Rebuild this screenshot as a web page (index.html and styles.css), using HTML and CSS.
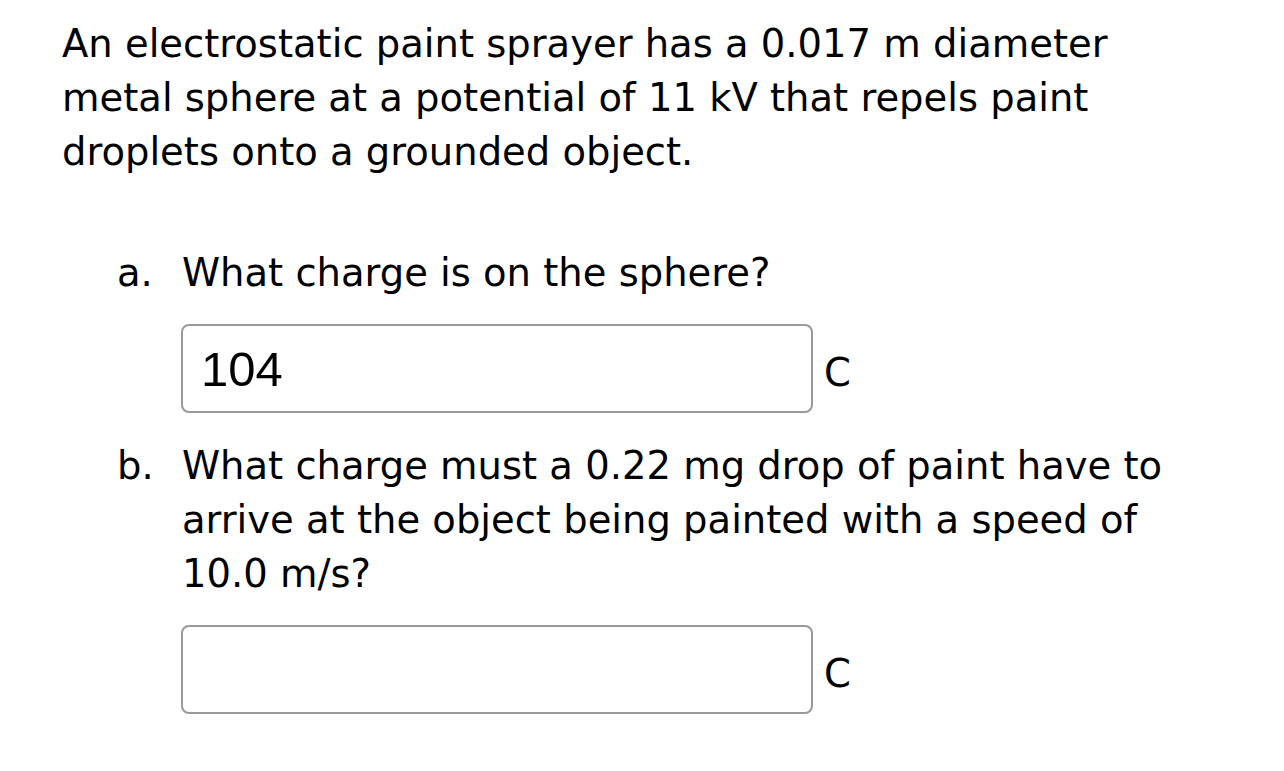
FILE: index.html
```html
<!DOCTYPE html>
<html lang="en">
<head>
<meta charset="utf-8">
<title>Electrostatic paint sprayer</title>
<link rel="stylesheet" href="styles.css">
</head>
<body>
<main class="problem">
  <p class="intro">An electrostatic paint sprayer has a 0.017 m diameter metal sphere at a potential of 11 kV that repels paint droplets onto a grounded object.</p>
  <ol class="parts">
    <li class="part">
      <span class="marker">a.</span>
      <div class="part-body">
        <p class="question">What charge is on the sphere?</p>
        <div class="answer-row">
          <input class="answer" type="text" value="104">
          <span class="unit">C</span>
        </div>
      </div>
    </li>
    <li class="part part-b">
      <span class="marker">b.</span>
      <div class="part-body">
        <p class="question">What charge must a 0.22 mg drop of paint have to arrive at the object being painted with a speed of 10.0 m/s?</p>
        <div class="answer-row">
          <input class="answer" type="text" value="">
          <span class="unit">C</span>
        </div>
      </div>
    </li>
  </ol>
</main>
</body>
</html>
```
FILE: styles.css
```css
html, body {
  margin: 0;
  padding: 0;
  background: #ffffff;
}

body {
  font-family: "DejaVu Sans", "Liberation Sans", sans-serif;
  font-size: 38.5px;
  line-height: 54px;
  color: #000000;
}

.problem {
  width: 1120px;
  padding: 17px 0 0 62px;
}

.intro {
  margin: 0;
}

.parts {
  list-style: none;
  margin: 67px 0 0 0;
  padding: 0;
}

.part {
  display: flex;
  align-items: flex-start;
}

.part-b {
  margin-top: 26px;
}

.marker {
  flex: 0 0 65px;
  margin-left: 55px;
}

.part-body {
  flex: 1;
  min-width: 0;
}

.question {
  margin: 0;
}

.answer-row {
  display: flex;
  align-items: baseline;
  margin-top: 24px;
  margin-left: -1px;
}

.answer {
  box-sizing: border-box;
  width: 632px;
  height: 89px;
  margin: 0;
  padding: 0 18px;
  border: 2px solid #999999;
  border-radius: 8px;
  background: #ffffff;
  font-family: "Liberation Sans", Arial, sans-serif;
  font-size: 49px;
  color: #000000;
  outline: none;
}

.unit {
  margin-left: 11px;
}
```
